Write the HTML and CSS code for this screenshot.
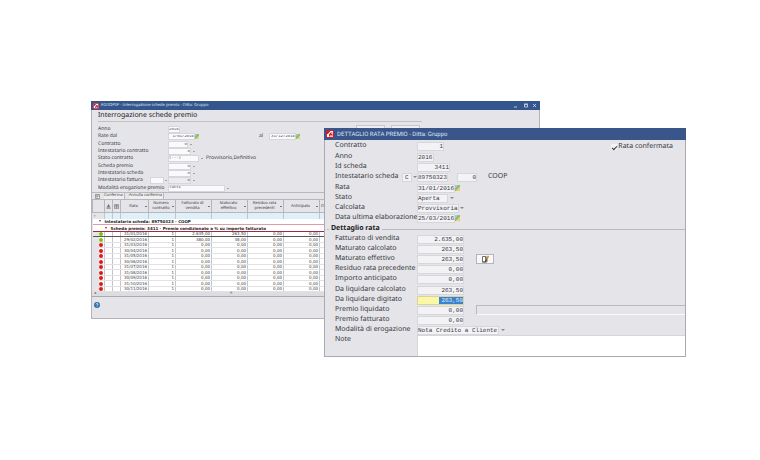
FILE: index.html
```
<!DOCTYPE html>
<html lang="it">
<head>
<meta charset="utf-8">
<title>Interrogazione schede premio</title>
<link rel="stylesheet" href="styles.css">
</head>
<body>
<main class="desktop">
<section class="window search">
  <header class="titlebar">
    <svg class="logo" viewBox="0 0 16 16"><path fill="#c8202f" d="M0 0h16v16H0z"/><path fill="#fff" d="M2 2h12v12H2z"/><path fill="#c8202f" d="M2 2h7L4 8H2zM6 9l3-4h4v2h-3v1h3v5h-2v-3H9v3H6z"/></svg>
    <span class="title">EGDOPSP - Interrogazione schede premio - Ditta: Gruppo</span>
    <svg class="controls" viewBox="0 0 24 5"><path d="M1 4h3M11.500 1.500h3v2.500h-3zM11 1h4M20 1l3 3M23 1l-3 3" fill="none" stroke="#d5deed" stroke-width=".8"/></svg>
  </header>
  <h1>Interrogazione schede premio</h1>
  <div class="actions"><button type="button" aria-label="Cerca"></button><button type="button" aria-label="Annulla"></button></div>
  <form class="filters">
    <div class="group">
      <div class="row"><label for="f1">Anno</label><input id="f1" class="w12" value="2016"></div>
      <div class="row"><label for="f2">Rate dal</label><input id="f2" class="w27 num" value="1/01/2016"><i class="cal"></i><label class="to" for="f3">al</label><input id="f3" class="w27 num" value="31/12/2016"><i class="cal"></i></div>
    </div>
    <div class="group">
      <div class="row"><label for="f4">Contratto</label><input id="f4" class="w20 num" value="0"><i class="arrow"></i></div>
      <div class="row"><label for="f5">Intestatario contratto</label><input id="f5" class="w23 num" value="0"><i class="arrow"></i></div>
      <div class="row"><label for="f6">Stato contratto</label><select id="f6" class="w31"><option>[...]</option></select><i class="arrow"></i><span class="hint">Provvisorio,Definitivo</span></div>
    </div>
    <div class="group">
      <div class="row"><label for="f7">Scheda premio</label><input id="f7" class="w23 num" value="0"><i class="arrow"></i></div>
      <div class="row"><label for="f8">Intestatario scheda</label><input id="f8" class="w23 num" value="0"><i class="arrow"></i></div>
      <div class="row"><label class="short" for="f9">Intestatario fattura</label><select id="f9" class="type" aria-label="Tipo"><option></option></select><i class="arrow wide"></i><input class="w23 num off" aria-label="Intestatario fattura" value="0"><i class="arrow"></i></div>
    </div>
    <div class="group">
      <div class="row"><label for="f10">Modalità erogazione premio</label><select id="f10" class="w57"><option>Tutti</option></select><i class="arrow"></i></div>
    </div>
  </form>
  <div class="toolbar">
    <svg viewBox="0 0 6 6"><path d="M.5.500h5v5h-5zM.5 2.500h5M2.500.500v5" fill="#fff" stroke="#888"/></svg>
    <button type="button">Conferma</button><button type="button">Annulla conferma</button>
  </div>
  <table class="grid">
    <colgroup><col class="c-mark"><col class="c-ico"><col class="c-ico"><col class="c-date"><col class="c-num"><col class="c-val"><col class="c-val"><col class="c-val"><col class="c-val"><col></colgroup>
    <thead>
      <tr><th></th><th><svg viewBox="0 0 6 6"><path d="M3 .5l1.500 3h-3zM.5 4.500h5M.5 5.500h5" fill="#777" stroke="#666" stroke-width=".6"/></svg></th><th><svg viewBox="0 0 6 6"><path d="M.5.500h5v5h-5zM.5 2h5M.5 3.500h5M3 .5v5" fill="#ddd" stroke="#666" stroke-width=".6"/></svg></th><th class="sort">Rata</th><th class="sort">Numero<br>contratto</th><th class="sort">Fatturato di<br>vendita</th><th class="sort">Maturato<br>effettivo</th><th class="sort">Residuo rata<br>precedenti</th><th class="sort">Anticipato</th><th class="left">D</th></tr>
      <tr class="filter"><td class="head">▿</td><td></td><td></td><td></td><td></td><td></td><td></td><td></td><td></td><td></td></tr>
    </thead>
    <tbody>
      <tr class="band"><th colspan="10"><i class="tri"></i>Intestatario scheda: 89750323 - COOP</th></tr>
      <tr class="band sub"><th colspan="10"><i class="tri"></i>Scheda premio: 3411 - Premio condizionato a % su importo fatturato</th></tr>
    </tbody>
    <tbody class="data">
      <tr class="current"><td><i class="dot ok"></i></td><td></td><td></td><td>31/01/2016</td><td>1</td><td>2.635,00</td><td>263,50</td><td>0,00</td><td>0,00</td><td></td></tr>
      <tr><td><i class="dot ok"></i></td><td></td><td></td><td>29/02/2016</td><td>1</td><td>380,00</td><td>38,00</td><td>0,00</td><td>0,00</td><td></td></tr>
      <tr><td><i class="dot"></i></td><td></td><td></td><td>31/03/2016</td><td>1</td><td>0,00</td><td>0,00</td><td>0,00</td><td>0,00</td><td></td></tr>
      <tr><td><i class="dot"></i></td><td></td><td></td><td>30/04/2016</td><td>1</td><td>0,00</td><td>0,00</td><td>0,00</td><td>0,00</td><td></td></tr>
      <tr><td><i class="dot"></i></td><td></td><td></td><td>31/05/2016</td><td>1</td><td>0,00</td><td>0,00</td><td>0,00</td><td>0,00</td><td></td></tr>
      <tr><td><i class="dot"></i></td><td></td><td></td><td>30/06/2016</td><td>1</td><td>0,00</td><td>0,00</td><td>0,00</td><td>0,00</td><td></td></tr>
      <tr><td><i class="dot"></i></td><td></td><td></td><td>31/07/2016</td><td>1</td><td>0,00</td><td>0,00</td><td>0,00</td><td>0,00</td><td></td></tr>
      <tr><td><i class="dot"></i></td><td></td><td></td><td>31/08/2016</td><td>1</td><td>0,00</td><td>0,00</td><td>0,00</td><td>0,00</td><td></td></tr>
      <tr><td><i class="dot"></i></td><td></td><td></td><td>30/09/2016</td><td>1</td><td>0,00</td><td>0,00</td><td>0,00</td><td>0,00</td><td></td></tr>
      <tr><td><i class="dot"></i></td><td></td><td></td><td>31/10/2016</td><td>1</td><td>0,00</td><td>0,00</td><td>0,00</td><td>0,00</td><td></td></tr>
      <tr><td><i class="dot"></i></td><td></td><td></td><td>30/11/2016</td><td>1</td><td>0,00</td><td>0,00</td><td>0,00</td><td>0,00</td><td></td></tr>
    </tbody>
  </table>
  <div class="scroll"><span>◂</span><span class="grip">≡</span></div>
  <footer><svg viewBox="0 0 12 12"><circle cx="6" cy="6" r="5.500" fill="#2f78b8" stroke="#1d5a94"/><path d="M4 4.500Q4 3 6 3t2 1.600Q8 5.600 6 6.500V7.500M6 8.500v1.200" fill="none" stroke="#fff" stroke-width="1.300"/></svg></footer>
</section>

<section class="window detail">
  <header class="titlebar">
    <svg class="logo" viewBox="0 0 16 16"><path fill="#c8202f" d="M0 0h16v16H0z"/><path fill="#fff" d="M2 2h12v12H2z"/><path fill="#c8202f" d="M2 2h7L4 8H2zM6 9l3-4h4v2h-3v1h3v5h-2v-3H9v3H6z"/></svg>
    <span class="title">DETTAGLIO RATA PREMIO - Ditta: Gruppo</span>
  </header>
  <form>
    <div class="top">
      <div class="fields">
        <div class="group">
          <div class="row"><label for="d1">Contratto</label><input id="d1" class="w27 num" value="1"></div>
        </div>
        <div class="group">
          <div class="row"><label for="d2">Anno</label><input id="d2" class="w17" value="2016"></div>
          <div class="row"><label for="d3">Id scheda</label><input id="d3" class="w33 num" value="3411"></div>
          <div class="row"><label class="short" for="d4">Intestatario scheda</label><select class="type" aria-label="Tipo"><option>C</option></select><i class="arrow narrow"></i><input id="d4" class="w31" value="89750323"><input class="code num" aria-label="Codice" value="0"><span class="hint">COOP</span></div>
        </div>
        <div class="group">
          <div class="row"><label for="d5">Rata</label><input id="d5" class="w38" value="31/01/2016"><i class="cal"></i></div>
          <div class="row"><label for="d6">Stato</label><select id="d6" class="w31"><option>Aperta</option></select><i class="arrow"></i></div>
          <div class="row"><label for="d7">Calcolata</label><select id="d7" class="w42"><option>Provvisoria</option></select><i class="arrow narrow"></i></div>
          <div class="row"><label for="d8">Data ultima elaborazione</label><input id="d8" class="w38" value="25/03/2016"><i class="cal"></i></div>
        </div>
      </div>
      <label class="confirm"><input type="checkbox" checked>Rata confermata</label>
    </div>
    <h2>Dettaglio rata</h2>
    <div class="group">
      <div class="row"><label for="e1">Fatturato di vendita</label><input id="e1" class="w47 num" value="2.635,00"></div>
      <div class="row"><label for="e2">Maturato calcolato</label><input id="e2" class="w47 num" value="263,50"></div>
      <div class="row"><label for="e3">Maturato effettivo</label><input id="e3" class="w47 num" value="263,50"><button type="button" class="edit" aria-label="Modifica"><svg viewBox="0 0 18 16"><path d="M3 3h6v11H3zM9 3l3 2v9H3" fill="#fff" stroke="#444" stroke-width="1.500"/><path d="M10 10l5-8" stroke="#d08a20" stroke-width="3"/><path d="M9 13l2-4" stroke="#222" stroke-width="2"/></svg></button></div>
      <div class="row"><label for="e4">Residuo rata precedente</label><input id="e4" class="w47 num" value="0,00"></div>
      <div class="row"><label for="e5">Importo anticipato</label><input id="e5" class="w47 num" value="0,00"></div>
    </div>
    <div class="group">
      <div class="row"><label for="e6">Da liquidare calcolato</label><input id="e6" class="w47 num" value="263,50"></div>
      <div class="row"><label for="e7">Da liquidare digitato</label><span class="active"><input id="e7" class="num" value="263,50"></span></div>
      <div class="row"><label for="e8">Premio liquidato</label><input id="e8" class="w47 num" value="0,00"><output class="status"></output></div>
      <div class="row"><label for="e9">Premio fatturato</label><input id="e9" class="w47 num" value="0,00"></div>
    </div>
    <div class="row mode"><label for="e10">Modalità di erogazione</label><select id="e10" class="w82"><option>Nota Credito a Cliente</option></select><i class="arrow"></i></div>
    <div class="row note"><label for="e11">Note</label><textarea id="e11"></textarea></div>
  </form>
</section>
</main>
</body>
</html>
```
FILE: styles.css
```
* { box-sizing: border-box; }
body { margin: 0; background: #fff; color: #3a3a3e; font-family: "Noto Sans", sans-serif; text-rendering: geometricPrecision; }
.desktop { position: relative; min-height: 100vh; }
h1, h2 { margin: 0; font-weight: 400; }
input, select, textarea, button { margin: 0; padding: 0; border: 0; border-radius: 0; font: inherit; color: inherit; appearance: none; min-width: 0; outline: 0; text-rendering: inherit; }
svg { display: block; }

.window { position: absolute; background: #e4e4e9; }
.search { left: 91px; top: 101px; width: 449px; border: 1px solid #b4b4b8; border-top: 0; font: 5px/7px "Noto Sans", sans-serif; }
.detail { left: 324px; top: 128px; width: 362px; border: 1px solid #aaaaae; border-top: 0; font-size: 7px; line-height: 10px; }

.titlebar { display: flex; align-items: center; gap: 2px; height: 9px; margin: 0 -1px; padding: 0 3px 0 2px; background: #35568c; color: #dfe6f2; font: 4px/8px "Noto Sans", sans-serif; }
.titlebar .logo { width: 6px; height: 6px; }
.titlebar .title { flex: 1; }
.controls { width: 24px; height: 5px; }
.detail .titlebar { height: 12px; gap: 3px; background: #39558a; font: 6px/11px Roboto, sans-serif; }
.detail .logo { width: 8px; height: 8px; }

h1 { margin: 0 117px 0 6px; font: 7px/11px "Noto Sans", sans-serif; color: #222; border-bottom: 1px solid #c0c0c5; }
.actions { display: flex; gap: 6px; height: 4px; padding-left: 264px; }
.actions button { width: 29px; height: 6px; margin-top: 3px; background: #efeff3; border: 1px solid #c8c8cc; }
.filters { display: flex; flex-direction: column; gap: 1px; padding-left: 6px; }
.row { display: flex; align-items: center; height: 7px; white-space: nowrap; }
.row > label { flex: none; width: 70px; }
.row input, .row select, .row textarea { height: 7px; padding: 0; background: #f3f3f6; border: 1px solid #d6d6db; font: 4px/5px "Liberation Mono", monospace; }
.search .row input, .search .row select { background: #fafafc; }
.search .row .off { background: #ececf0; }
.num { text-align: right; }
.w12 { width: 12px; } .w17 { width: 17px; } .w20 { width: 20px; } .w23 { width: 23px; } .w27 { width: 27px; }
.w31 { width: 31px; } .w33 { width: 33px; } .w38 { width: 38px; } .w42 { width: 42px; }
.w47 { width: 47px; } .w57 { width: 57px; } .w82 { width: 82px; }
.row > label.short { width: 52px; }
.row > label.to { width: 10px; margin-left: 60px; }
.search .type { width: 14px; }
.hint { margin-left: 2px; }
.arrow { display: flex; align-items: center; justify-content: center; width: 5px; height: 100%; }
.arrow::after { content: ""; border: 1px solid transparent; border-top-color: #666; border-bottom: 0; }
.search .wide { width: 4px; }
.cal { width: 4px; height: 5px; background: linear-gradient(135deg, #a9c6dc 30%, #8cbf70 30% 60%, #f0cc70 60%); }

.toolbar { display: flex; align-items: center; gap: 4px; height: 7px; padding-left: 3px; border-top: 1px solid #b8b8bd; font: 4px/6px "Noto Sans", sans-serif; }
.toolbar svg { width: 5px; height: 5px; }
.toolbar button { padding-right: 1px; border-right: 1px solid #b8b8bd; line-height: 6px; }

.grid { width: 100%; table-layout: fixed; border-collapse: collapse; font: 4px/5px "DejaVu Sans", sans-serif; }
.c-mark { width: 12px; } .c-ico { width: 8px; } .c-date { width: 28px; } .c-num { width: 27px; } .c-val { width: 36px; }
.grid th, .grid td { height: 5px; padding: 0 1px; line-height: 5px; border-right: 1px solid #c4c4c9; text-align: right; font-weight: 400; white-space: nowrap; overflow: hidden; }
.grid thead th { height: 13px; border: 1px solid #b6b6bb; background: #e4e4e9; text-align: center; font-family: "Noto Sans", sans-serif; }
.grid thead th.left { text-align: left; }
.grid thead svg { width: 5px; height: 5px; }
.grid thead .sort { background: linear-gradient(#777, #777) right 1px center / 2px 1px no-repeat #e4e4e9; padding-right: 3px; }
.grid .filter td { height: 6px; background: #dff0fb; }
.grid .filter .head { background: #e4e4e9; text-align: left; color: #777; }
.grid .band th { height: 6px; padding-left: 6px; background: #fff; border: 0; text-align: left; font: 700 4px/5px "DejaVu Sans", sans-serif; color: #222; border-bottom: 1px solid #d9a0ac; }
.grid .sub th { height: 7px; padding-left: 12px; border-bottom: 1px solid #a82540; }
.tri { display: inline-block; margin-right: 4px; border: 1px solid transparent; border-top: 2px solid #b01830; border-bottom: 0; vertical-align: 1px; }
.data td { background: #fff; border-bottom: 1px solid #e2e2e5; line-height: 4px; }
.data tr:nth-child(even) td { height: 6px; }
.data td:first-child { background: linear-gradient(90deg, #e4e4e9 6px, #fff 6px); }
.data .current td { border-bottom-color: #555; }
.dot { display: block; width: 4px; height: 4px; margin-left: auto; border-radius: 50%; background: #e01818; }
.dot.ok { background: #7cc010; }
.scroll { display: flex; height: 5px; padding-left: 2px; background: #dcdce1; border-bottom: 1px solid #aaaab0; font-size: 4px; line-height: 4px; color: #666; }
.scroll .grip { margin-left: 134px; }
footer { height: 21px; padding: 5px 0 0 2px; }
footer svg { width: 6px; height: 6px; }

.detail form { padding-top: 1px; }
.top { display: flex; justify-content: space-between; }
.detail .group { display: grid; margin-bottom: 1px; }
.detail .row { height: 10px; padding-left: 10px; }
.detail .row > label { width: 82px; }
.detail .row > label.short { width: 67px; }
.detail .row input, .detail .row select, .detail .row textarea { height: 9px; font-size: 6px; line-height: 7px; }
.detail .row > .type { width: 10px; padding: 0 2px; }
.detail .row > .code { width: 20px; margin-left: 9px; }
.detail .hint { margin-left: 11px; }
.detail .cal { width: 5px; height: 6px; }
.detail .arrow { width: 7px; height: 9px; }
.detail .arrow::after { border-width: 2px 2px 0; border-top-color: #888; }
.detail .narrow { width: 5px; }
.confirm { display: flex; align-items: center; gap: 1px; height: 10px; margin: 1px 12px 0 0; }
.confirm input { display: grid; place-items: center; width: 6px; height: 6px; background: #f4f4f7; }
.confirm input:checked::after { content: ""; width: 4px; height: 2px; border: solid #333; border-width: 0 0 1px 1px; transform: rotate(-45deg); }
h2 { display: flex; align-items: center; gap: 2px; padding-left: 2px; font-size: 7px; line-height: 10px; font-weight: 700; color: #222; }
h2::before, h2::after { content: ""; height: 1px; background: #b9b9be; }
h2::before { width: 2px; }
h2::after { flex: 1; }
.edit { display: grid; place-items: center; width: 18px; height: 10px; margin-left: 12px; background: #f8f8fa; border: 1px solid #b4b4b9; }
.edit svg { width: 9px; height: 8px; }
.active { display: flex; justify-content: flex-end; width: 47px; height: 9px; background: #fbf7a6; border: 1px solid #d9d3a0; }
.detail .row .active input { width: 24px; height: 7px; padding: 0; border: 0; background: #3c82cc; color: #dcecff; }
.status { flex: 1; height: 10px; margin-left: 12px; border: solid #b9b9be; border-width: 1px 0 0 1px; border-bottom: 1px solid #fafafc; }
.detail .row.mode { margin-top: -1px; }
.detail .row.note { align-items: flex-start; height: 21px; }
.detail .row.note textarea { flex: 1; height: 21px; resize: none; background: #fff; border-width: 1px 0 0 1px; }
```
